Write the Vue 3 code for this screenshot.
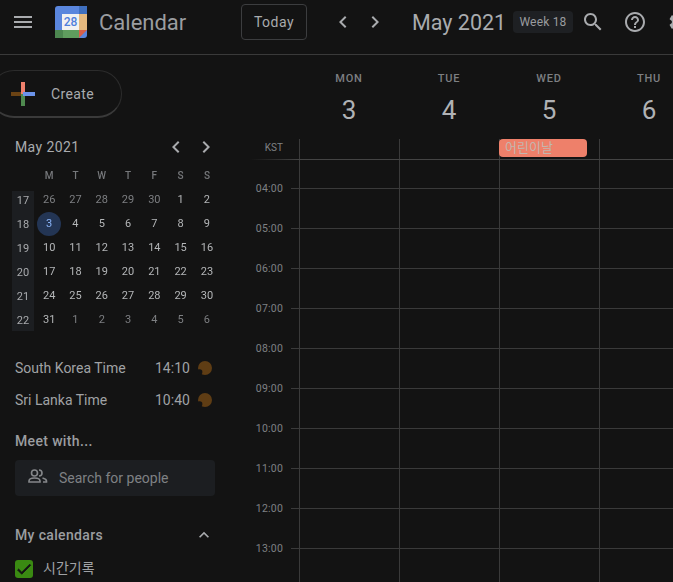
<script setup>
const days = [['MON', 3], ['TUE', 4], ['WED', 5], ['THU', 6]]
const hours = ['04:00', '05:00', '06:00', '07:00', '08:00', '09:00', '10:00', '11:00', '12:00', '13:00']
const heads = ['M', 'T', 'W', 'T', 'F', 'S', 'S']
const weeks = [
  [17, [26, 27, 28, 29, 30, 1, 2], [0, 1, 2, 3, 4]],
  [18, [3, 4, 5, 6, 7, 8, 9], []],
  [19, [10, 11, 12, 13, 14, 15, 16], []],
  [20, [17, 18, 19, 20, 21, 22, 23], []],
  [21, [24, 25, 26, 27, 28, 29, 30], []],
  [22, [31, 1, 2, 3, 4, 5, 6], [1, 2, 3, 4, 5, 6]]
]
const zones = [['South Korea Time', '14:10'], ['Sri Lanka Time', '10:40']]
const left = 'M15.41 7.41L14 6l-6 6 6 6 1.41-1.41L10.83 12z'
const right = 'M10 6L8.59 7.41 13.17 12l-4.58 4.59L10 18l6-6z'
</script>

<template>
  <div class="app">
    <header class="top">
      <svg class="menu" viewBox="0 0 24 24" width="24" height="24"><path d="M3 18h18v-2H3v2zm0-5h18v-2H3v2zm0-7v2h18V6H3z" /></svg>
      <div class="logo">
        <svg viewBox="0 0 32 32" width="32" height="32">
          <rect width="32" height="32" rx="3" fill="#5a86dd" />
          <rect x="24" y="0" width="8" height="8" fill="#3f6fbe" />
          <rect x="24" y="8" width="8" height="16" fill="#e5b97f" />
          <rect x="0" y="24" width="24" height="8" fill="#5f9d5e" />
          <rect x="0" y="24" width="8" height="8" fill="#4c8650" />
          <path d="M24 24h8l-8 8z" fill="#d8604a" />
          <rect x="7" y="8" width="17" height="16" fill="#f1f1f1" />
        </svg>
        <span class="logo-num">28</span>
      </div>
      <span class="brand">Calendar</span>
      <button class="today">Today</button>
      <svg class="nav first" viewBox="0 0 24 24" width="24" height="24"><path :d="left" /></svg>
      <svg class="nav second" viewBox="0 0 24 24" width="24" height="24"><path :d="right" /></svg>
      <span class="title">May 2021</span>
      <span class="week">Week 18</span>
      <svg class="search" viewBox="0 0 24 24" width="24" height="24"><path d="M15.5 14h-.79l-.28-.27C15.41 12.59 16 11.11 16 9.5 16 5.91 13.09 3 9.5 3S3 5.91 3 9.5 5.91 16 9.5 16c1.61 0 3.09-.59 4.23-1.57l.27.28v.79l5 4.99L20.49 19l-4.99-5zm-6 0C7.01 14 5 11.99 5 9.5S7.01 5 9.5 5 14 7.01 14 9.5 11.99 14 9.5 14z" /></svg>
      <svg class="help" viewBox="0 0 24 24" width="24" height="24"><path d="M11 18h2v-2h-2v2zm1-16C6.48 2 2 6.48 2 12s4.48 10 10 10 10-4.48 10-10S17.52 2 12 2zm0 18c-4.41 0-8-3.59-8-8s3.59-8 8-8 8 3.59 8 8-3.59 8-8 8zm0-14c-2.21 0-4 1.79-4 4h2c0-1.1.9-2 2-2s2 .9 2 2c0 2-3 1.75-3 5h2c0-2.25 3-2.5 3-5 0-2.21-1.79-4-4-4z" /></svg>
      <svg class="gear" viewBox="0 0 24 24" width="24" height="24"><path d="M19.14 12.94c.04-.3.06-.61.06-.94 0-.32-.02-.64-.07-.94l2.03-1.58c.18-.14.23-.41.12-.61l-1.92-3.32c-.12-.22-.37-.29-.59-.22l-2.39.96c-.5-.38-1.03-.7-1.62-.94l-.36-2.54c-.04-.24-.24-.41-.48-.41h-3.84c-.24 0-.43.17-.47.41l-.36 2.54c-.59.24-1.13.57-1.62.94l-2.39-.96c-.22-.08-.47 0-.59.22L2.74 8.87c-.12.21-.08.47.12.61l2.03 1.58c-.05.3-.09.63-.09.94s.02.64.07.94l-2.03 1.58c-.18.14-.23.41-.12.61l1.92 3.32c.12.22.37.29.59.22l2.39-.96c.5.38 1.03.7 1.62.94l.36 2.54c.05.24.24.41.48.41h3.84c.24 0 .44-.17.47-.41l.36-2.54c.59-.24 1.13-.56 1.62-.94l2.39.96c.22.08.47 0 .59-.22l1.92-3.32c.12-.22.07-.47-.12-.61l-2.01-1.58zM12 15.6c-1.98 0-3.6-1.62-3.6-3.6s1.62-3.6 3.6-3.6 3.6 1.62 3.6 3.6-1.62 3.6-3.6 3.6z" /></svg>
    </header>

    <div class="body">
      <aside class="side">
        <button class="create">
          <svg viewBox="0 0 24 24" width="24" height="24" class="plus">
            <rect x="0" y="10" width="12" height="4" fill="#6b4314" />
            <rect x="10" y="0" width="4" height="12" fill="#ee806c" />
            <rect x="10" y="12" width="4" height="12" fill="#4f8a4f" />
            <rect x="12" y="10" width="12" height="4" fill="#6b93ea" />
          </svg>
          <span>Create</span>
        </button>

        <div class="mini-head">
          <span class="mini-title">May 2021</span>
          <svg class="mini-nav a" viewBox="0 0 24 24" width="24" height="24"><path :d="left" /></svg>
          <svg class="mini-nav b" viewBox="0 0 24 24" width="24" height="24"><path :d="right" /></svg>
        </div>

        <div class="mini">
          <div class="mini-row heads">
            <span class="wk"></span>
            <span v-for="(h, i) in heads" :key="i" class="cell">{{ h }}</span>
          </div>
          <div class="mini-weeks">
            <div v-for="w in weeks" :key="w[0]" class="mini-row">
              <span class="wk num">{{ w[0] }}</span>
              <span v-for="(d, i) in w[1]" :key="i" class="cell" :class="{ dim: w[2].includes(i), sel: w[0] === 18 && i === 0 }">{{ d }}</span>
            </div>
          </div>
        </div>

        <div class="zones">
          <div v-for="z in zones" :key="z[0]" class="zone">
            <span class="zname">{{ z[0] }}</span>
            <span class="ztime">{{ z[1] }}</span>
            <svg class="moon" viewBox="0 0 14 14" width="14" height="14">
              <circle cx="7" cy="7" r="7" fill="#5f3d14" />
              <circle cx="1.6" cy="11" r="2.8" fill="#131313" />
            </svg>
          </div>
        </div>

        <div class="section-title meet">Meet with...</div>
        <div class="people">
          <svg class="people-icon" viewBox="0 0 20 16" width="20" height="16">
            <circle cx="6.5" cy="5" r="3" />
            <path d="M1 14v-1c0-2 3-3 5.5-3s5.5 1 5.5 3v1z" />
            <path d="M11 2a3 3 0 0 1 0 6" />
            <path d="M14.5 10c2 .5 4 1.5 4 3v1h-3.500" />
          </svg>
          <span>Search for people</span>
        </div>

        <div class="cal-head">
          <span class="section-title">My calendars</span>
          <svg viewBox="0 0 24 24" width="20" height="20"><path d="M7.41 15.41L12 10.83l4.59 4.58L18 14l-6-6-6 6z" /></svg>
        </div>
        <div class="cal-item">
          <span class="check">
            <svg viewBox="0 0 24 24" width="18" height="18"><path d="M9 16.17L4.83 12l-1.42 1.41L9 19 21 7l-1.41-1.41z" stroke="#131313" stroke-width="1" /></svg>
          </span>
          <span class="cal-name">시간기록</span>
        </div>
      </aside>

      <main class="main">
        <div class="day-head">
          <div v-for="d in days" :key="d[0]" class="day">
            <span class="dow">{{ d[0] }}</span>
            <span class="dnum">{{ d[1] }}</span>
          </div>
        </div>
        <div class="grid">
          <div class="allday">
            <span class="kst">KST</span>
            <div class="event">어린이날</div>
          </div>
          <div class="allday-line"></div>
          <div class="hours">
            <div v-for="h in hours" :key="h" class="hour">
              <span class="hlabel">{{ h }}</span>
            </div>
          </div>
        </div>
      </main>
    </div>
  </div>
</template>

<style>
html, body { margin: 0; background: #131313; }
</style>

<style scoped>
.app {
  width: 673px;
  height: 582px;
  overflow: hidden;
  background: #131313;
  color: #bdc0c3;
  font-family: Roboto, "Noto Sans CJK KR", sans-serif;
  display: flex;
  flex-direction: column;
}
svg { flex: none; display: block; fill: #a9abae; }

.top {
  flex: none;
  box-sizing: border-box;
  border-bottom: 1px solid #3a3a3a;
  height: 55px;
  display: flex;
  align-items: center;
  padding-bottom: 10px;
}
.top > * { flex: none; }
.menu { margin-left: 11px; }
.logo { position: relative; width: 32px; height: 32px; margin-left: 20px; }
.logo-num {
  position: absolute;
  left: 7px;
  top: 8px;
  width: 17px;
  height: 16px;
  line-height: 16px;
  text-align: center;
  color: #4f7fdc;
  font-size: 12px;
  font-weight: 500;
}
.brand { margin-left: 12px; font-size: 22px; color: #9b9da0; width: 142px; }
.today {
  width: 66px;
  height: 36px;
  box-sizing: border-box;
  background: transparent;
  border: 1px solid #3c3d3f;
  border-radius: 4px;
  color: #a9abae;
  font: 400 14px Roboto, sans-serif;
  letter-spacing: .5px;
  padding: 0;
}
.nav.first { margin-left: 24px; }
.nav.second { margin-left: 8px; }
.title { margin-left: 25px; font-size: 21.5px; color: #a9abae; width: 101px; white-space: nowrap; }
.week {
  width: 60px;
  height: 22px;
  line-height: 22px;
  text-align: center;
  background: #1e2023;
  border-radius: 4px;
  font-size: 12px;
  color: #9a9c9f;
  letter-spacing: .2px;
}
.search { margin-left: 8px; }
.help { margin-left: 18px; }
.gear { margin-left: 20px; }

.body { flex: 1; display: flex; min-height: 0; }

.side { width: 250px; flex: none; }
.create {
  margin: 15px 0 0 -10px;
  width: 132px;
  height: 48px;
  box-sizing: border-box;
  display: flex;
  align-items: center;
  padding: 0 0 0 20px;
  background: #131313;
  border: 1px solid #2c2c2c;
  border-bottom: 2px solid #3a3a3a;
  border-radius: 24px;
  color: #a9abae;
  font: 400 14px Roboto, sans-serif;
  letter-spacing: .4px;
}
.plus { fill: none; margin-right: 16px; }

.mini-head { display: flex; align-items: center; margin-top: 17px; height: 24px; padding-left: 15px; }
.mini-title { font-size: 14px; font-weight: 400; color: #a9abae; width: 149px; letter-spacing: .4px; }
.mini-nav.b { margin-left: 6px; }
.mini { margin: 5px 0 0 12px; width: 210px; will-change: transform; }
.mini-row { display: flex; height: 24px; align-items: center; }
.mini-weeks {
  background: linear-gradient(#1c1e21, #1c1e21) no-repeat 0 3px / 22px 140px;
}
.wk { width: 22px; margin-right: 2px; text-align: center; font-size: 11px; color: #a9abae; flex: none; }
.cell {
  width: 26.3px;
  height: 24px;
  line-height: 24px;
  flex: none;
  text-align: center;
  font-size: 11px;
  font-weight: 400;
  color: #b4b6b8;
  position: relative;
}
.heads .cell { color: #76787b; font-size: 10px; font-weight: 500; }
.cell.dim { color: #7d7f82; }
.cell.sel { color: #8ab4f8; z-index: 0; }
.sel::before {
  content: '';
  position: absolute;
  left: 1px;
  top: 0;
  width: 24px;
  height: 24px;
  border-radius: 50%;
  background: #233554;
  z-index: -1;
}

.zones { margin-top: 20px; }
.zone { display: flex; align-items: center; height: 32px; padding-left: 15px; font-size: 14px; color: #a0a2a5; }
.zname { width: 140px; }
.ztime { width: 43px; }

.section-title { font-size: 14px; font-weight: 500; color: #9b9da0; letter-spacing: .35px; }
.meet { margin: 15px 0 0 15px; height: 20px; line-height: 20px; }
.people {
  margin: 9px 0 0 15px;
  width: 200px;
  height: 36px;
  box-sizing: border-box;
  padding-left: 13px;
  background: #1c1e21;
  border-radius: 4px;
  display: flex;
  align-items: center;
  font-size: 14px;
  color: #7f8184;
}
.people-icon { margin-right: 11px; margin-top: -5px; fill: none; stroke: #85878a; stroke-width: 1.6; }
.cal-head { margin: 29px 0 0 15px; height: 20px; width: 199px; display: flex; align-items: center; justify-content: space-between; }
.cal-item { display: flex; align-items: center; margin: 13px 0 0 15px; gap: 10px; height: 20px; }
.check { width: 18px; height: 18px; border-radius: 3px; background: #3a8a12; display: flex; align-items: center; justify-content: center; margin-top: 2px; }
.check svg { fill: #131313; }
.cal-name { font-size: 14px; color: #a0a2a5; margin-top: -2px; }

.main { flex: 1; min-width: 0; display: flex; flex-direction: column; }
.day-head { height: 84px; flex: none; display: flex; padding-left: 49px; }
.day { width: 100px; flex: none; display: flex; flex-direction: column; align-items: center; }
.dow { margin-top: 17px; font-size: 11px; font-weight: 500; letter-spacing: .8px; color: #7d7f82; line-height: 14px; }
.dnum { margin-top: 6px; font-size: 26px; line-height: 36px; color: #b0b2b5; }
.grid {
  flex: 1;
  min-height: 0;
  background: linear-gradient(to right, #3a3a3a 1px, transparent 1px) 49px 0 / 100px 100% repeat-x;
}
.allday { height: 20px; display: grid; grid-template-columns: 49px repeat(3, 100px); }
.kst { font-size: 10px; color: #7f8184; line-height: 18px; padding-right: 16px; text-align: right; }
.event {
  grid-column: 4;
  width: 88px;
  height: 18px;
  line-height: 16px;
  box-sizing: border-box;
  padding-left: 6px;
  background: #ee806a;
  border-radius: 4px;
  font-size: 13px;
  color: #c4b6ae;
  font-family: "Noto Sans CJK KR", sans-serif;
}
.allday-line { height: 1px; background: linear-gradient(to right, transparent, #444 49px); }
.hours { padding-top: 8px; }
.hour { height: 40px; display: flex; align-items: center; }
.hour::after { content: ''; flex: 1; height: 1px; background: #3a3a3a; margin-left: 8px; }
.hlabel { width: 33px; text-align: right; font-size: 10.5px; color: #7f8184; letter-spacing: .2px; }
</style>
